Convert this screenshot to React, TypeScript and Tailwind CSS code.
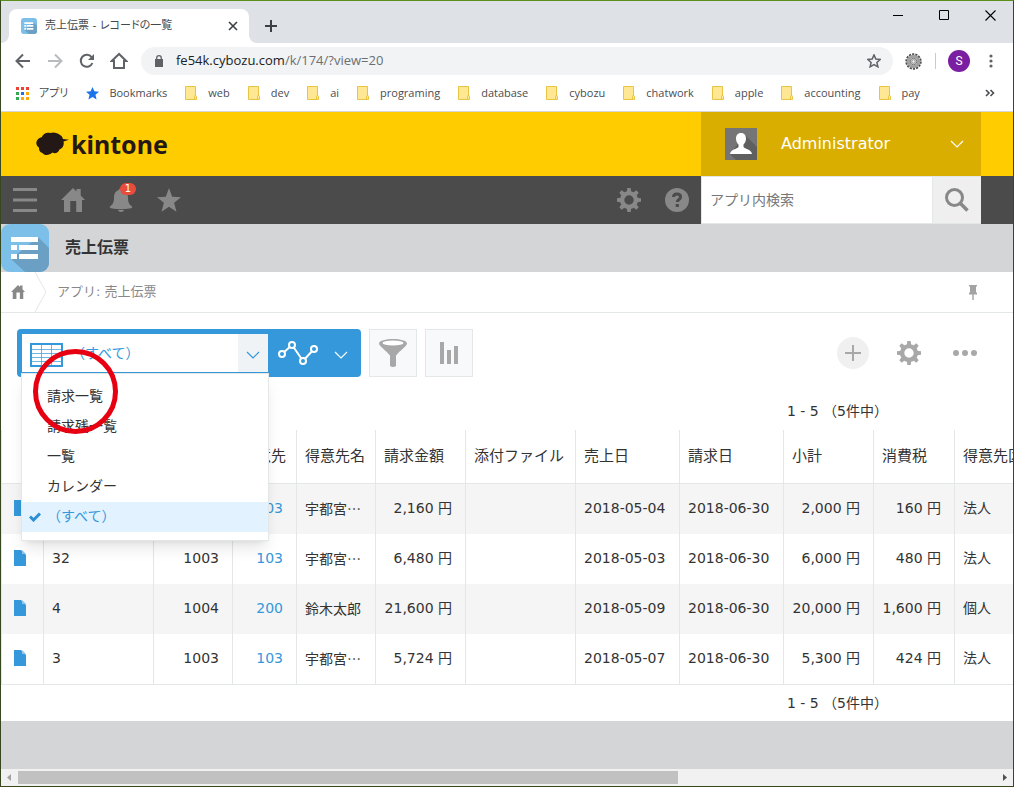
import type { ReactNode } from 'react';

const bookmarks = ['web', 'dev', 'ai', 'programing', 'database', 'cybozu', 'chatwork', 'apple', 'accounting', 'pay'];

const views = ['請求一覧', '請求残一覧', '一覧', 'カレンダー'];

interface Column {
  label: string;
  width: string;
  right?: boolean;
  link?: boolean;
}

const columns: Column[] = [
  { label: '', width: 'w-[110px]' },
  { label: '', width: 'w-[79px]', right: true },
  { label: '得意先', width: 'w-[64px]', right: true, link: true },
  { label: '得意先名', width: 'w-[79px]' },
  { label: '請求金額', width: 'w-[90px]', right: true },
  { label: '添付ファイル', width: 'w-[110px]' },
  { label: '売上日', width: 'w-[104px]' },
  { label: '請求日', width: 'w-[104px]' },
  { label: '小計', width: 'w-[90px]', right: true },
  { label: '消費税', width: 'w-[81px]', right: true },
  { label: '得意先区分', width: 'w-[110px]' },
];

const records = [
  ['', '', '103', '宇都宮…', '2,160 円', '', '2018-05-04', '2018-06-30', '2,000 円', '160 円', '法人'],
  ['32', '1003', '103', '宇都宮…', '6,480 円', '', '2018-05-03', '2018-06-30', '6,000 円', '480 円', '法人'],
  ['4', '1004', '200', '鈴木太郎', '21,600 円', '', '2018-05-09', '2018-06-30', '20,000 円', '1,600 円', '個人'],
  ['3', '1003', '103', '宇都宮…', '5,724 円', '', '2018-05-07', '2018-06-30', '5,300 円', '424 円', '法人'],
];

const teeth = [0, 45, 90, 135, 180, 225, 270, 315];

function Gear() {
  return (
    <svg width="24" height="24" viewBox="0 0 24 24" fill="currentColor">
      <circle cx="12" cy="12" r="6.9" fill="none" stroke="currentColor" strokeWidth="4.4" />
      {teeth.map((angle) => (
        <path key={angle} d="M9.8 4 10.3 0h3.4l.5 4z" transform={`rotate(${angle} 12 12)`} />
      ))}
    </svg>
  );
}

function House({ size }: { size: number }) {
  return (
    <svg width={size} height={size} viewBox="0 0 24 24" fill="currentColor">
      <path d="M12 0 15.5 3.4V1h4.2v6.4L24 12h-3v12h-5.8v-11H9.3v11H3V12H0z" />
    </svg>
  );
}

function AppIcon({ size }: { size: number }) {
  return (
    <svg width={size} height={size} viewBox="0 0 48 48" className="block">
      <rect width="48" height="48" rx="9" fill="#7cbfe8" />
      <path d="M37 13 48 24v15a9 9 0 0 1-9 9H24L10 35z" fill="#6b9fc3" />
      <path d="M10 13h27v5H10zM10 21h6v5h-6zM18 21h19v5H18zM10 30h6v5h-6zM18 30h19v5H18z" fill="#fff" />
    </svg>
  );
}

function Chevron({ size = 14 }: { size?: number }) {
  return (
    <svg width={size} height="8" viewBox="0 0 14 8" fill="none" stroke="currentColor" strokeWidth="1.2">
      <path d="M1 1l6 6 6-6" />
    </svg>
  );
}

function Folder() {
  return (
    <svg width="13" height="14" viewBox="0 0 13 14">
      <path d="M.5.5h10v13H.5z" fill="#ffe793" stroke="#e9c443" />
      <path d="M9.5 10.5a1 1 0 0 1 2 0v3h-2z" fill="#ffe793" stroke="#e9c443" />
    </svg>
  );
}

function IconButton({ label, className = '', children }: { label: string; className?: string; children: ReactNode }) {
  return (
    <button type="button" aria-label={label} className={`flex shrink-0 items-center justify-center ${className}`}>
      {children}
    </button>
  );
}

function TabStrip() {
  return (
    <div className="flex h-[42px] items-end bg-[#dee1e6]">
      <div className="relative ml-2 flex h-[34px] w-60 items-center rounded-t-lg bg-white pl-3 pr-2">
        <svg width="8" height="8" className="absolute bottom-0 -left-2" fill="#fff">
          <path d="M8 0v8H0a8 8 0 0 0 8-8z" />
        </svg>
        <svg width="8" height="8" className="absolute -right-2 bottom-0" fill="#fff">
          <path d="M0 0v8h8a8 8 0 0 1-8-8z" />
        </svg>
        <AppIcon size={16} />
        <span className="ml-2 flex-1 whitespace-nowrap text-[11px] text-[#45494d] [font-feature-settings:'palt']">
          売上伝票 - レコードの一覧
        </span>
        <IconButton label="閉じる" className="size-4">
          <svg width="10" height="10" viewBox="0 0 10 10" stroke="#3c4043" strokeWidth="1.6">
            <path d="M1 1l8 8M9 1L1 9" />
          </svg>
        </IconButton>
      </div>
      <IconButton label="新しいタブ" className="ml-2 h-[34px] w-7">
        <svg width="12" height="12" viewBox="0 0 12 12" stroke="#3c4043" strokeWidth="2">
          <path d="M6 0v12M0 6h12" />
        </svg>
      </IconButton>
      <div className="ml-auto flex self-start text-black">
        <IconButton label="最小化" className="h-7 w-[46px]">
          <svg width="10" height="10" viewBox="0 0 10 10" stroke="currentColor">
            <path d="M0 5.5h10" />
          </svg>
        </IconButton>
        <IconButton label="最大化" className="h-7 w-[46px]">
          <svg width="10" height="10" viewBox="0 0 10 10" fill="none" stroke="currentColor">
            <path d="M.5.5h9v9h-9z" />
          </svg>
        </IconButton>
        <IconButton label="ウィンドウを閉じる" className="h-7 w-[46px]">
          <svg width="11" height="11" viewBox="0 0 11 11" stroke="currentColor" strokeWidth="1.1">
            <path d="M.5.5l10 10M10.5.5l-10 10" />
          </svg>
        </IconButton>
      </div>
    </div>
  );
}

function AddressBar() {
  return (
    <div className="flex h-9 items-center bg-white pr-3 pl-1.5 text-[#5f6368]">
      <IconButton label="戻る" className="w-8">
        <svg width="16" height="16" viewBox="0 0 16 16" fill="none" stroke="currentColor" strokeWidth="2">
          <path d="M15 8H2M8 1.5L1.5 8 8 14.5" />
        </svg>
      </IconButton>
      <IconButton label="進む" className="w-8 text-[#b9bbbe]">
        <svg width="16" height="16" viewBox="0 0 16 16" fill="none" stroke="currentColor" strokeWidth="2">
          <path d="M1 8h13M8 1.5L14.5 8 8 14.5" />
        </svg>
      </IconButton>
      <IconButton label="再読み込み" className="w-8">
        <svg width="16" height="16" viewBox="0 0 16 16" fill="none" stroke="currentColor" strokeWidth="2">
          <path d="M13.4 10A6 6 0 1 1 12.6 4.2" />
          <path d="M15 1v6H9z" fill="currentColor" stroke="none" />
        </svg>
      </IconButton>
      <IconButton label="ホーム" className="w-8">
        <svg width="18" height="18" viewBox="0 0 18 18" fill="none" stroke="currentColor" strokeWidth="2">
          <path d="M9 2L1.800 9H4v7h10V9h2.200z" />
        </svg>
      </IconButton>
      <div className="ml-1.5 flex h-7 flex-1 items-center rounded-full bg-[#f1f3f4] px-3">
        <svg width="10" height="12" viewBox="0 0 10 12" className="ml-px">
          <path d="M1 4h8v8H1z" fill="#5f6368" />
          <path d="M2.700 4.500V3a2.300 2.300 0 0 1 4.600 0v1.500" fill="none" stroke="#5f6368" strokeWidth="1.300" />
        </svg>
        <a href="#url" className="ml-3 font-['Open_Sans','Noto_Sans_CJK_JP',sans-serif] text-[13px] text-[#6b6f73]">
          <span className="text-[#202124]">fe54k.cybozu.com</span>/k/174/?view=20
        </a>
        <IconButton label="ブックマークに追加" className="ml-auto">
          <svg width="14" height="14" viewBox="0 0 14 14" fill="none" stroke="currentColor" strokeWidth="1.500">
            <path d="M7 .9l1.800 4.100 4.500.4-3.400 3 1 4.400L7 10.500l-3.900 2.300 1-4.400-3.400-3 4.500-.4z" />
          </svg>
        </IconButton>
      </div>
      <IconButton label="拡張機能" className="ml-2.5 w-5">
        <svg width="17" height="17" viewBox="0 0 17 17" fill="none">
          <circle cx="8.500" cy="8.500" r="7" stroke="#4c4c4c" strokeWidth="2.400" strokeDasharray="2.100 1.040" />
          <circle cx="8.500" cy="8.500" r="5.200" stroke="#a0a0a0" strokeWidth="3" />
          <circle cx="8.500" cy="8.500" r="3.200" stroke="#666" />
          <circle cx="8.500" cy="8.500" r="1.800" fill="#eee" stroke="#888" />
        </svg>
      </IconButton>
      <div className="ml-3 h-4 w-px bg-[#c8cacd]" />
      <button
        type="button"
        className="ml-3 size-[22px] rounded-full bg-[#7b1fa2] font-['Roboto',sans-serif] text-xs leading-[22px] text-white"
      >
        S
      </button>
      <IconButton label="メニュー" className="ml-[11px] w-5">
        <svg width="4" height="14" viewBox="0 0 4 14" fill="currentColor">
          <circle cx="2" cy="2" r="1.600" />
          <circle cx="2" cy="7" r="1.600" />
          <circle cx="2" cy="12" r="1.600" />
        </svg>
      </IconButton>
    </div>
  );
}

function BookmarksBar() {
  return (
    <nav className="flex h-[33px] items-center gap-[18px] border-b border-[#d5d7da] bg-white pr-[18px] pb-1 pl-[15px] font-['Open_Sans','Noto_Sans_CJK_JP',sans-serif] text-[11px] text-[#4a4d51]">
      <a href="#apps" className="flex items-center gap-2.5">
        <svg width="13" height="13" viewBox="0 0 13 13">
          <path d="M0 0h3v3H0zM5 0h3v3H5zM10 0h3v3h-3z" fill="#ea4335" />
          <path d="M0 5h3v3H0z" fill="#34a853" />
          <path d="M5 5h3v3H5z" fill="#1a73e8" />
          <path d="M10 5h3v3h-3zM5 10h3v3H5zM10 10h3v3h-3z" fill="#fbab05" />
          <path d="M0 10h3v3H0z" fill="#34a853" />
        </svg>
        <span className="[font-feature-settings:'palt']">アプリ</span>
      </a>
      <a href="#bookmarks" className="flex items-center gap-2.5">
        <svg width="13" height="13" viewBox="0 0 14 14" fill="#1a73e8">
          <path d="M7 0l2 4.700 5 .4-3.800 3.300 1.200 5L7 10.800l-4.400 2.600 1.200-5L0 5.100l5-.4z" />
        </svg>
        Bookmarks
      </a>
      {bookmarks.map((name) => (
        <a key={name} href={`#${name}`} className="flex items-center gap-2.5">
          <Folder />
          {name}
        </a>
      ))}
      <IconButton label="その他" className="ml-auto">
        <svg width="10" height="8" viewBox="0 0 10 8" fill="none" stroke="#4a4d51" strokeWidth="1.600">
          <path d="M1 1l3 3-3 3M5.500 1l3 3-3 3" />
        </svg>
      </IconButton>
    </nav>
  );
}

function KintoneHeader() {
  return (
    <header>
      <div className="flex h-16 bg-[#ffcc00] pr-8">
        <a href="#top" className="ml-[35px] flex items-center gap-0.5 text-[#231815]">
          <svg width="33" height="24" viewBox="0 0 33 24" fill="currentColor">
            <path d="M6 5C7 1 12 0 14.500 1 17-.5 22 1 24 3c2 1 2.500 2.500 3 4l6 .8-5.500 1.700c1 4-1 7-4 8-1 3.500-5 4.500-7 3-3 3-8 3.500-10 .5C3 20 3 17 3 15.500-1 13-1 7 6 5z" />
          </svg>
          <span className="font-['Noto_Sans',sans-serif] text-[25px] leading-8 font-bold">kintone</span>
        </a>
        <button type="button" className="ml-auto flex w-[280px] items-center bg-[#d9ae00] pr-4 pl-6 text-white">
          <svg width="32" height="32" viewBox="0 0 32 32">
            <path d="M0 0h32v32H0z" fill="#757575" />
            <path d="M20 7l12 12v13H11l-6-6z" fill="#5f5f5f" />
            <path
              d="M16 5c3.500 0 5 2.500 5 5.500 0 2.500-1 4.500-2.500 6v2.500c1.500 2 8 2.500 8.500 7H5c.5-4.500 7-5 8.500-7v-2.500C12 15 11 13 11 10.500 11 7.500 12.500 5 16 5z"
              fill="#fff"
            />
          </svg>
          <span className="ml-6 flex-1 text-left text-base">Administrator</span>
          <Chevron size={16} />
        </button>
      </div>

      <div className="flex h-12 bg-[#4b4b4b] pr-8 text-[#888]">
        <IconButton label="メニュー" className="w-12">
          <svg width="24" height="24" viewBox="0 0 24 24" fill="currentColor">
            <path d="M0 0h24v3H0zM0 10.500h24v3H0zM0 21h24v3H0z" />
          </svg>
        </IconButton>
        <IconButton label="ポータル" className="w-12">
          <House size={24} />
        </IconButton>
        <IconButton label="通知" className="relative w-12">
          <svg width="24" height="24" viewBox="0 0 24 24" fill="currentColor">
            <path d="M12 0c1.500 0 2 1 2 2 4 1 5 4.500 5 8 0 5 1.500 6.500 4 8.500.8 1-.5 1.800-2 2.100-6 .9-12 .9-18 0-1.500-.3-2.800-1.100-2-2.100 2.500-2 4-3.500 4-8.500 0-3.500 1-7 5-8 0-1 .5-2 2-2zM9 22h6c-.5 2.500-5.500 2.500-6 0z" />
          </svg>
          <span className="absolute top-[7px] left-[23px] h-3 w-4 rounded-full bg-[#e74c3c] text-[10px] leading-3 text-white">
            1
          </span>
        </IconButton>
        <IconButton label="お気に入り" className="w-12">
          <svg width="24" height="24" viewBox="0 0 24 24" fill="currentColor">
            <path d="M12 0l3.200 8.700 8.800.5-6.900 5.600 2.400 8.900L12 18.800l-7.500 4.900 2.400-8.900L0 9.200l8.800-.5z" />
          </svg>
        </IconButton>
        <IconButton label="設定" className="ml-auto w-12">
          <Gear />
        </IconButton>
        <IconButton label="ヘルプ" className="w-12">
          <svg width="24" height="24" viewBox="0 0 24 24">
            <circle cx="12" cy="12" r="12" fill="currentColor" />
            <path
              d="M8.500 9c0-2 1.500-3 3.500-3s3.600 1 3.600 3c0 2.500-3.300 2.500-3.300 5"
              fill="none"
              stroke="#4b4b4b"
              strokeWidth="3"
            />
            <path d="M10.700 16h3.200v3h-3.200z" fill="#4b4b4b" />
          </svg>
        </IconButton>
        <input
          type="text"
          aria-label="アプリ内検索"
          placeholder="アプリ内検索"
          className="w-[232px] border border-[#e3e7e8] bg-white px-2 text-sm text-[#333] placeholder-[#777]"
        />
        <IconButton label="検索" className="w-12 border-y border-[#e3e7e8] bg-[#efefef]">
          <svg width="24" height="24" viewBox="0 0 24 24" fill="none" stroke="currentColor" strokeWidth="3">
            <circle cx="9.500" cy="9.500" r="8" />
            <path d="M15 15l7.500 7.500" strokeWidth="3.600" />
          </svg>
        </IconButton>
      </div>
    </header>
  );
}

function ViewSwitcher() {
  return (
    <div className="relative flex h-12 rounded-sm bg-[#3498db]">
      <button
        type="button"
        aria-haspopup="listbox"
        aria-expanded="true"
        className="mt-[5px] mb-1 ml-[5px] flex w-[246px] items-center border-b border-[#3498db] bg-white text-sm text-[#3498db]"
      >
        <svg width="33" height="24" viewBox="0 0 33 24" className="ml-2 mt-1 shrink-0" fill="none" stroke="#3498db">
          <path d="M1 1h31v22H1z" strokeWidth="2" />
          <path d="M11.500 1v22M21.500 1v22M1 6.500h31M1 10.500h31M1 14.500h31M1 18.500h31" strokeOpacity=".7" />
        </svg>
        <span className="ml-2 flex-1 text-left">（すべて）</span>
        <span className="flex h-full w-[30px] items-center justify-center bg-[#eff3f5] pt-1">
          <Chevron />
        </span>
      </button>
      <button type="button" aria-label="グラフ" className="flex w-[93px] items-center gap-3.5 pl-2 text-white">
        <svg width="44" height="26" viewBox="0 0 44 26" fill="none" stroke="currentColor" strokeWidth="2">
          <circle cx="6" cy="14" r="3" />
          <circle cx="16" cy="5" r="3" />
          <circle cx="27" cy="21" r="3" />
          <circle cx="38" cy="9" r="3" />
          <path d="M8.200 12l5.600-5M17.800 7.500l7.500 11M29 18.700l7-7.400" />
        </svg>
        <span className="pt-1">
          <Chevron />
        </span>
      </button>

      <ul
        role="listbox"
        aria-label="一覧"
        className="absolute top-11 left-1 z-10 w-[248px] border border-[#e3e7e8] bg-white py-2 text-sm text-[#333] shadow-lg"
      >
        {views.map((view) => (
          <li key={view} role="option" aria-selected="false" className="h-[30px] pl-[25px] leading-7">
            {view}
          </li>
        ))}
        <li
          role="option"
          aria-selected="true"
          className="flex h-[30px] items-center bg-[#e2f2fe] pl-[7px] text-[#3498db]"
        >
          <svg width="12" height="10" viewBox="0 0 12 10" fill="none" stroke="#2c8fd4" strokeWidth="3">
            <path d="M1 4.500L4.500 8 11 1.500" />
          </svg>
          <span className="ml-1.5 pb-0.5">（すべて）</span>
        </li>
      </ul>
    </div>
  );
}

function ViewToolbar() {
  return (
    <div className="flex items-center px-4 pt-4 text-[#a8a8a8]">
      <ViewSwitcher />
      <IconButton label="絞り込む" className="ml-2 size-12 border border-[#e3e7e8] bg-[#f7f9fa]">
        <svg width="28" height="28" viewBox="0 0 28 28" fill="currentColor">
          <path d="M0 4.500C0 1.500 7 0 14 0s14 1.500 14 4.500c0 2.500-7 7-11 12V27q-3 2-6 0V16.500C7 11.500 0 7 0 4.500z" />
          <ellipse cx="14" cy="4" rx="10.500" ry="2.500" fill="#fff" />
        </svg>
      </IconButton>
      <IconButton label="集計する" className="ml-2 size-12 border border-[#e3e7e8] bg-[#f7f9fa]">
        <svg width="20" height="22" viewBox="0 0 20 22" fill="currentColor">
          <path d="M1 0h4v22H1zM8 8h4v14H8zM15 4h4v18h-4z" />
        </svg>
      </IconButton>
      <div className="ml-auto flex items-center gap-6 pr-4">
        <IconButton label="レコードを追加する" className="size-8 rounded-full bg-[#f0f0f0]">
          <svg width="16" height="16" viewBox="0 0 16 16" stroke="currentColor" strokeWidth="2">
            <path d="M8 0v16M0 8h16" />
          </svg>
        </IconButton>
        <IconButton label="アプリを設定" className="w-8">
          <Gear />
        </IconButton>
        <IconButton label="オプション" className="w-8">
          <svg width="24" height="6" viewBox="0 0 24 6" fill="currentColor">
            <circle cx="3" cy="3" r="3" />
            <circle cx="12" cy="3" r="3" />
            <circle cx="21" cy="3" r="3" />
          </svg>
        </IconButton>
      </div>
    </div>
  );
}

function RecordTable() {
  return (
    <table className="w-[1063px] table-fixed border-separate border-spacing-0 text-sm whitespace-nowrap">
      <thead>
        <tr className="h-[54px] text-left text-[15px]">
          <th className="w-[42px] border-b border-l border-[#e3e7e8]" />
          {columns.map((column, i) => (
            <th key={i} className={`${column.width} border-b border-l border-[#e3e7e8] pl-2 font-normal`}>
              {column.label}
            </th>
          ))}
        </tr>
      </thead>
      <tbody>
        {records.map((record, row) => (
          <tr key={row} className="group h-[50px] odd:bg-[#f5f5f5] last:h-[51px]">
            <td className="border-l border-[#e3e7e8] pb-0.5 pl-3 group-last:border-b">
              <a href={`#record-${row}`} aria-label="レコードの詳細">
                <svg width="12" height="16" viewBox="0 0 12 16" className="block">
                  <path d="M0 0h7l5 5v11H0z" fill="#3498db" />
                  <path d="M8 0l4 4H8z" fill="#8fc6ec" />
                </svg>
              </a>
            </td>
            {record.map((value, i) => (
              <td
                key={i}
                className={`border-l border-[#e3e7e8] pb-0.5 pl-2 group-last:border-b ${columns[i].right ? 'pr-[13px] text-right' : ''} ${columns[i].label === '得意先名' ? "font-['Noto_Sans_CJK_JP',sans-serif]" : ''}`}
              >
                {columns[i].link ? (
                  <a href={`#customer-${value}`} className="text-[#3498db]">
                    {value}
                  </a>
                ) : (
                  value
                )}
              </td>
            ))}
          </tr>
        ))}
      </tbody>
    </table>
  );
}

function HorizontalScrollbar() {
  return (
    <div className="flex h-[17px] items-center bg-[#f1f1f1]">
      <svg width="17" height="17" viewBox="0 0 17 17" className="shrink-0">
        <path d="M10 5v7L6 8.500z" fill="#a3a3a3" />
      </svg>
      <div className="h-[13px] flex-1">
        <div className="h-full w-[67.5%] bg-[#c1c1c1]" />
      </div>
      <svg width="17" height="17" viewBox="0 0 17 17" className="shrink-0">
        <path d="M7 5v7l4-3.500z" fill="#505050" />
      </svg>
    </div>
  );
}

export default function App() {
  return (
    <div className="flex min-h-screen flex-col overflow-hidden border border-[#37471f] border-t-[#5a8f1e] bg-[#d4d5d7] font-['DejaVu_Sans','Noto_Sans_CJK_JP',sans-serif] text-[#333]">
      <TabStrip />
      <AddressBar />
      <BookmarksBar />
      <KintoneHeader />

      <div className="flex h-12 items-center">
        <AppIcon size={48} />
        <h1 className="ml-4 text-base font-bold">売上伝票</h1>
      </div>

      <main className="relative bg-white">
        <nav className="flex h-[41px] items-center border-b border-[#e3e7e8] text-[13px] text-[#888]">
          <a href="#portal" aria-label="ポータル" className="ml-2.5">
            <House size={14} />
          </a>
          <svg width="13" height="40" viewBox="0 0 13 40" className="ml-[9px]" fill="none" stroke="#e3e7e8">
            <path d="M1 0l11 20L1 40" />
          </svg>
          <a href="#app" className="ml-2.5">
            アプリ: 売上伝票
          </a>
          <button type="button" aria-label="ピン留め" className="mr-9 ml-auto">
            <svg width="8" height="15" viewBox="0 0 8 15" fill="#a3a3a3">
              <path d="M0 0h8v1.500H7V7l1 1v1.500H4.700V15H3.300V9.500H0V8l1-1V1.500H0z" />
            </svg>
          </button>
        </nav>
        <ViewToolbar />
        <div className="flex h-[53px] items-end justify-end pr-[125px] pb-[9px] text-sm">1 - 5 （5件中）</div>
        <div className="overflow-hidden">
          <RecordTable />
        </div>
        <div className="flex h-9 items-center justify-end pr-[125px] text-sm">1 - 5 （5件中）</div>

        {/* highlight ring around the first view */}
        <div className="pointer-events-none absolute top-[77px] left-8 z-20 size-[85px] rounded-full border-5 border-[#e60012]" />
      </main>

      <div className="flex-1" />
      <HorizontalScrollbar />
    </div>
  );
}
